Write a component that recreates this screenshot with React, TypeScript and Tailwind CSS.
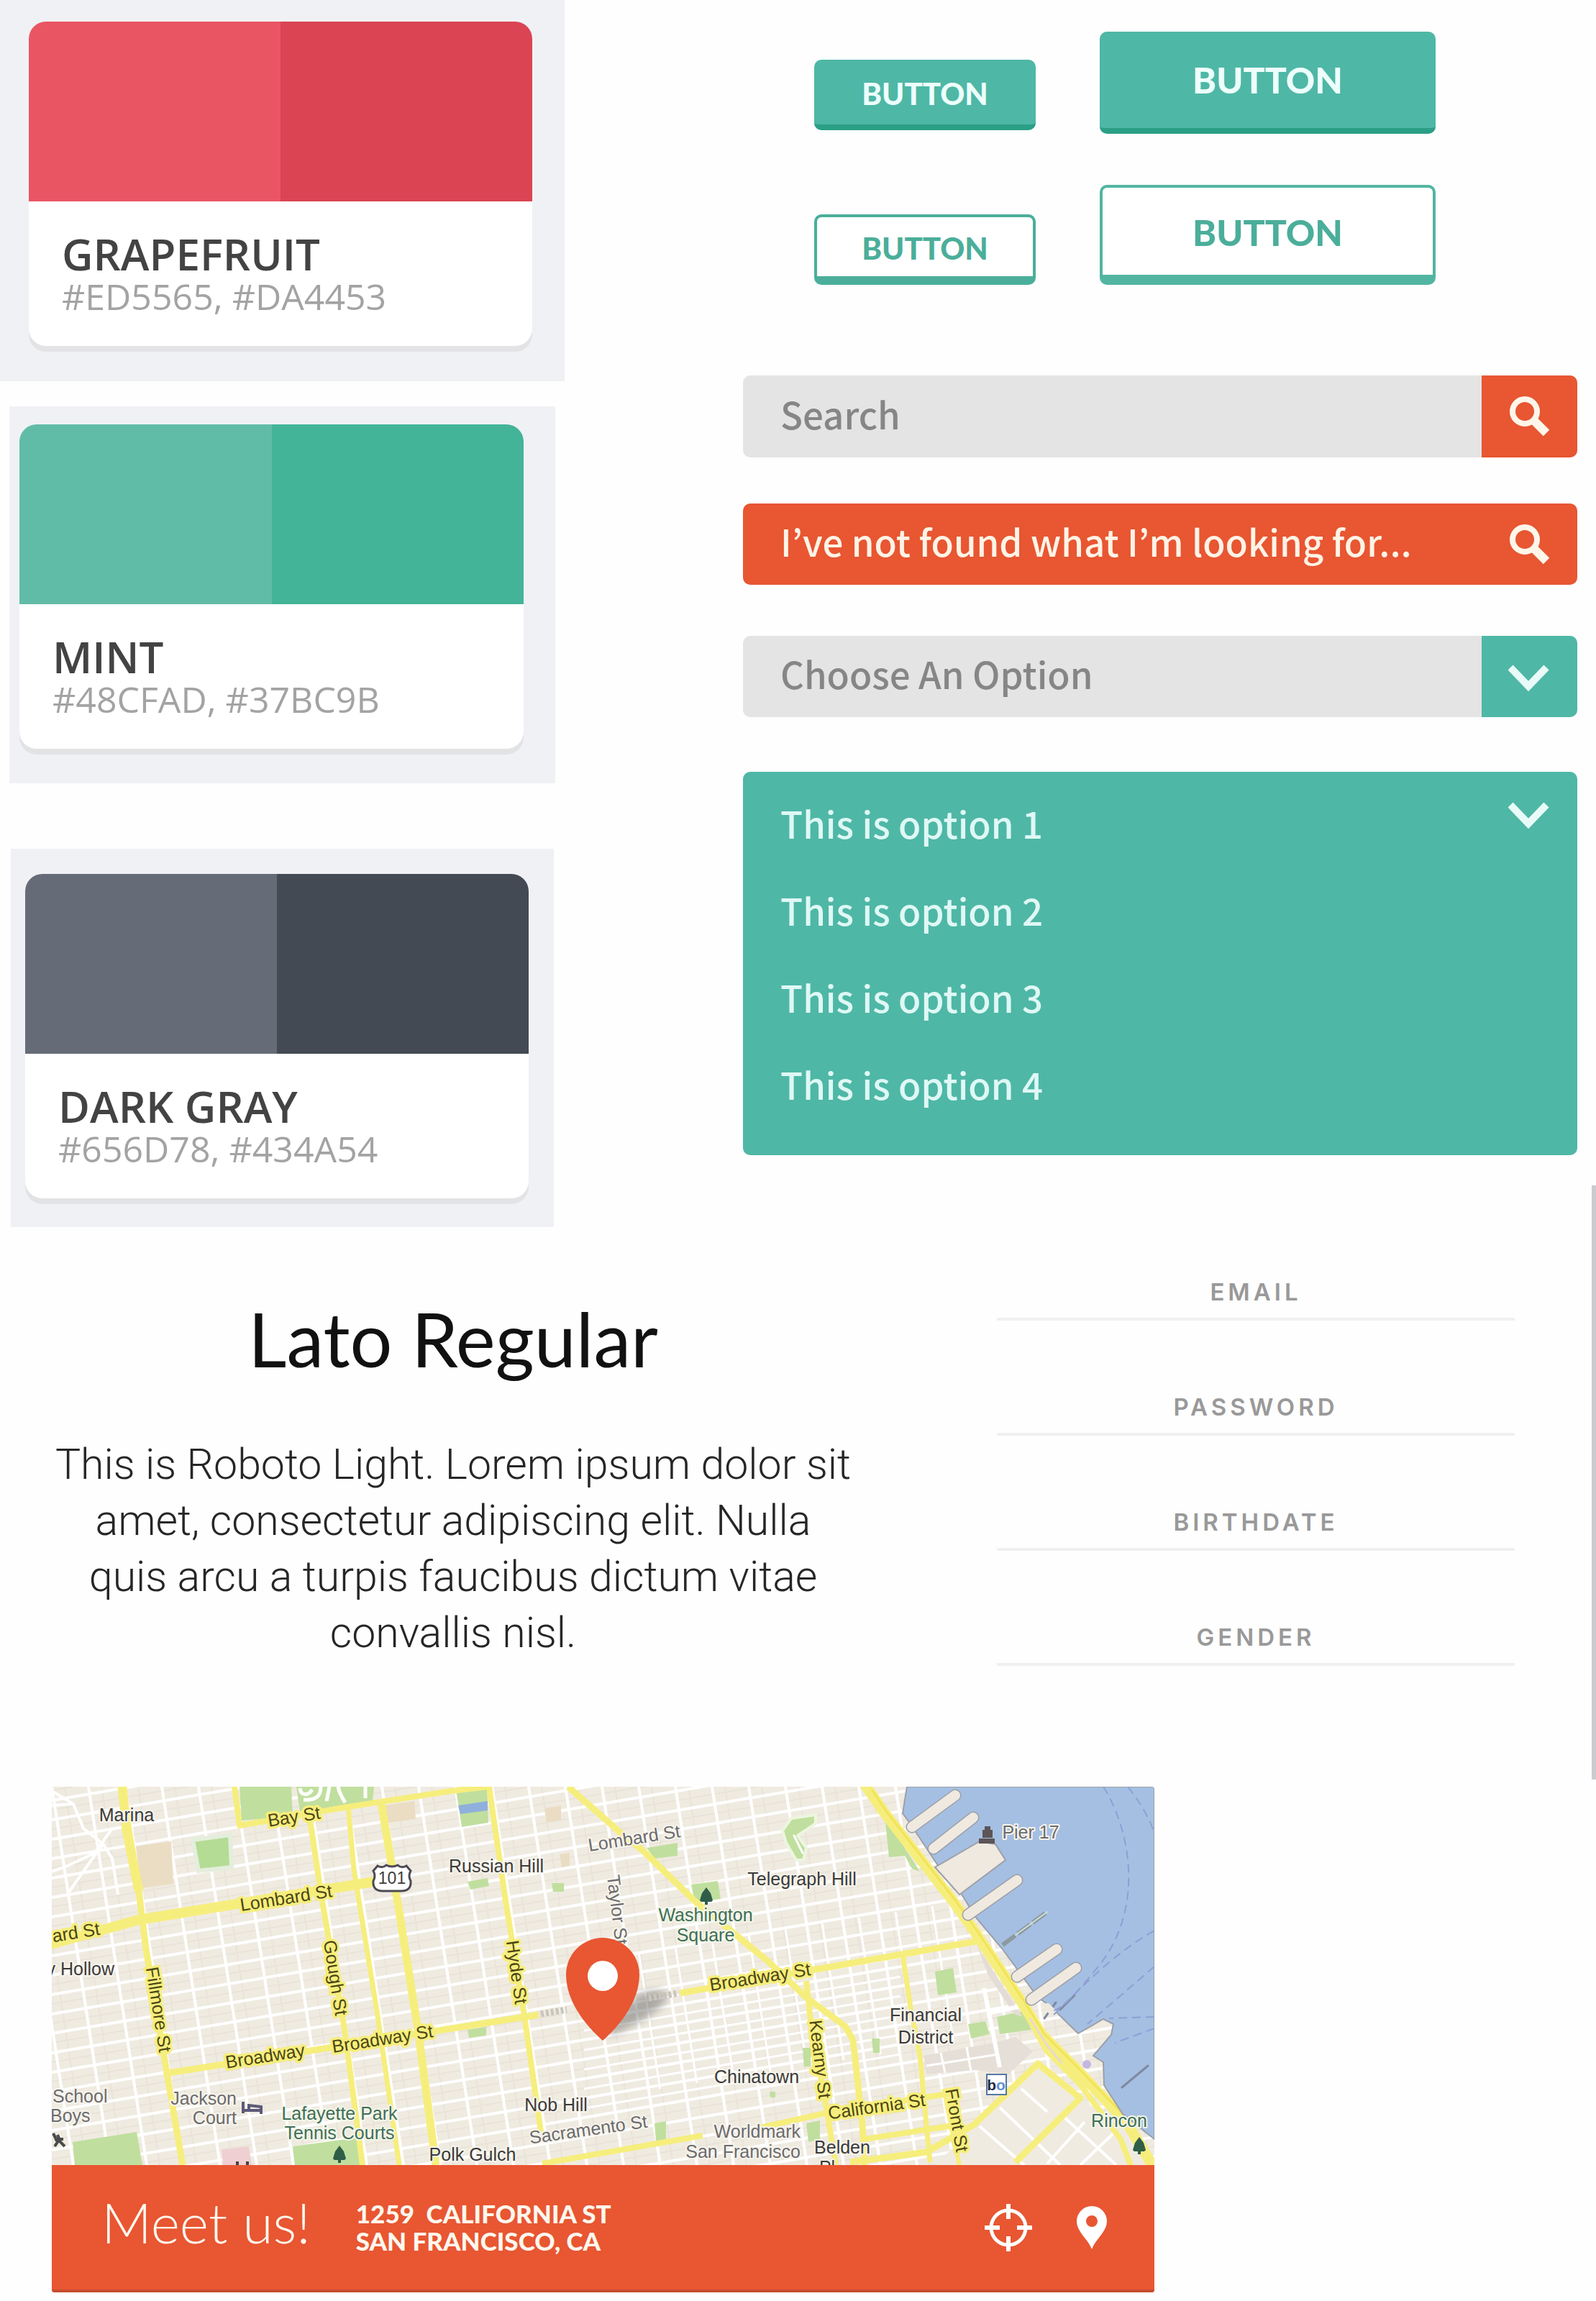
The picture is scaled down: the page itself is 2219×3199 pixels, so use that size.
import type { ReactNode } from "react";

type Swatch = {
  name: string;
  codes: string;
  frame: string;
  light: string;
  dark: string;
};

const swatches: Swatch[] = [
  {
    name: "GRAPEFRUIT",
    codes: "#ED5565, #DA4453",
    frame: "pt-[30px] pr-[45px] pb-[49px] pl-10",
    light: "bg-[#ea5564]",
    dark: "bg-[#da4453]",
  },
  {
    name: "MINT",
    codes: "#48CFAD, #37BC9B",
    frame: "mt-[35px] mx-[13px] pt-[25px] pr-[44px] pb-[48px] pl-[14px]",
    light: "bg-[#61bca7]",
    dark: "bg-[#43b498]",
  },
  {
    name: "DARK GRAY",
    codes: "#656D78, #434A54",
    frame: "mt-[91px] mx-[15px] pt-[35px] pr-[35px] pb-10 pl-5",
    light: "bg-[#666c77]",
    dark: "bg-[#444a53]",
  },
];

function SwatchCard({ swatch }: { swatch: Swatch }) {
  return (
    <div className={`bg-[#f0f1f5] ${swatch.frame}`}>
      <article className="overflow-hidden rounded-[24px] bg-white shadow-[0_8px_0_#e3e3e6]">
        <div className="flex h-[250px]">
          <div className={`flex-1 ${swatch.light}`} />
          <div className={`flex-1 ${swatch.dark}`} />
        </div>
        <div className="px-[46px] pt-[43px] pb-10 font-['Open_Sans',sans-serif]">
          <h3 className="text-[60px] leading-[60px] font-semibold text-[#434343]">{swatch.name}</h3>
          <p className="text-[50px] leading-[58px] text-[#a3a3a3]">{swatch.codes}</p>
        </div>
      </article>
    </div>
  );
}

function SearchIcon() {
  return (
    <svg viewBox="0 0 60 60" className="size-[60px]" fill="none" stroke="#fff6ea" aria-hidden="true">
      <circle cx="23" cy="23" r="17" strokeWidth="8" />
      <path d="M36 36 53 53" strokeWidth="12" />
    </svg>
  );
}

function ChevronIcon() {
  return (
    <svg viewBox="0 0 60 40" className="h-10 w-[60px]" fill="none" stroke="#e9fbf8" aria-hidden="true">
      <path d="M3 7 28 33 53 7" strokeWidth="10" />
    </svg>
  );
}

const options = ["This is option 1", "This is option 2", "This is option 3", "This is option 4"];

function Controls() {
  return (
    <div className="flex flex-1 flex-col pt-11 pr-[26px] pl-[248px] font-['Noto_Sans_CJK_KR','Noto_Sans',sans-serif] text-[51px] font-medium">
      <div className="flex flex-col gap-[71px] pl-[99px] font-['Lato',sans-serif] font-black">
        <div className="flex items-end gap-[89px]">
          <button className="mb-[5px] h-[98px] w-[308px] rounded-[10px] border-b-8 border-[#2b9f86] bg-[#4fb7a6] pt-1 text-[42px] text-[#edfffb]">
            BUTTON
          </button>
          <button className="h-[142px] w-[467px] rounded-[10px] border-b-8 border-[#2b9f86] bg-[#4fb7a6] text-[50px] text-[#edfffb]">
            BUTTON
          </button>
        </div>
        <div className="flex items-end gap-[89px]">
          <button className="h-[98px] w-[308px] rounded-[10px] border-4 border-b-12 border-[#4bae9a] bg-white pt-1 text-[42px] text-[#4bae9a]">
            BUTTON
          </button>
          <button className="h-[139px] w-[467px] rounded-[10px] border-4 border-b-14 border-[#52b5a1] bg-white pt-1 text-[50px] text-[#4bae9a]">
            BUTTON
          </button>
        </div>
      </div>

      <form className="mt-[126px] flex h-[114px] overflow-hidden rounded-[10px] bg-[#e4e4e4]">
        <input
          type="text"
          aria-label="Search"
          placeholder="Search"
          className="min-w-0 flex-1 bg-transparent pb-2 pl-[52px] text-[#868686] outline-none placeholder:text-[#868686]"
        />
        <button type="button" aria-label="Search" className="flex w-[133px] items-center justify-center bg-[#e85632]">
          <SearchIcon />
        </button>
      </form>

      <form className="mt-16 flex h-[113px] overflow-hidden rounded-[10px] bg-[#e85632]">
        <input
          type="text"
          aria-label="Search again"
          defaultValue="I’ve not found what I’m looking for..."
          className="min-w-0 flex-1 bg-transparent pb-2 pl-[52px] text-[#fff3e6] outline-none"
        />
        <button type="button" aria-label="Search again" className="flex w-[133px] items-center justify-center">
          <SearchIcon />
        </button>
      </form>

      <div className="relative mt-[71px] h-[113px]">
        <select
          aria-label="Choose An Option"
          className="h-full w-full appearance-none rounded-[10px] bg-[#e4e4e4] pb-2 pl-[52px] text-[#868686] outline-none"
        >
          <option>Choose An Option</option>
        </select>
        <span className="pointer-events-none absolute inset-y-0 right-0 flex w-[133px] items-center justify-center rounded-r-[10px] bg-[#4fb7a6]">
          <ChevronIcon />
        </span>
      </div>

      <div className="mt-[76px] flex items-start justify-between rounded-[10px] bg-[#4fb7a6] pt-[11px] pr-[36px] pb-[38px] pl-[52px] text-[#dff8f5]">
        <ul className="flex-1">
          {options.map((option) => (
            <li key={option}>
              <button className="block w-full text-left leading-[121px]">{option}</button>
            </li>
          ))}
        </ul>
        <button aria-label="Close options" className="mt-7">
          <ChevronIcon />
        </button>
      </div>
    </div>
  );
}

const fields = [
  { label: "EMAIL", type: "email" },
  { label: "PASSWORD", type: "password" },
  { label: "BIRTHDATE", type: "text" },
  { label: "GENDER", type: "text" },
];

function range(count: number) {
  return Array.from({ length: count }, (_, index) => index);
}

function Streets() {
  return (
    <g fill="none">
      <g stroke="#e9e3d8" strokeWidth="2">
        {range(34).map((i) => (
          <path key={i} d={`M${-84 + i * 51} 0l81 526`} />
        ))}
        {range(34).map((i) => (
          <path key={i} d={`M0 ${5 + i * 27}l1533 -261`} />
        ))}
      </g>
      <g stroke="#ffffff" strokeWidth="4">
        {range(33).map((i) => (
          <path key={i} d={`M${-102 + i * 51} 0l81 526`} />
        ))}
        {range(30).map((i) => (
          <path key={i} d={`M0 ${19 + i * 27}l1533 -261`} />
        ))}
        <path d="M0 6 30 24 44 58 72 80 84 100 92 150M84 58 60 92 22 110 0 118M72 80 62 92 24 146M0 26 30 24" />
      </g>
      <g stroke="#ffffff" strokeWidth="3">
        {range(9).map((i) => (
          <path key={i} d={`M${816 + i * 51} ${230 - i * 8}l30 190`} />
        ))}
        {range(6).map((i) => (
          <path key={i} d={`M740 ${312 + i * 27}l440 -75`} />
        ))}
      </g>
    </g>
  );
}

function Parks() {
  return (
    <g>
      <g fill="#c0df9e">
        <path d="M261 0H333L335 41 264 47Z" />
        <path d="M340 0H448L446 20 398 28 345 34Z" />
        <path d="M578 132 606 127 608 138 582 143Z" />
        <path d="M695 134H712V146H697Z" />
        <path d="M578 338 604 334V346L580 349Z" />
        <path d="M29 494 118 480 126 526H32Z" />
        <path d="M335 500 424 488 432 526H338Z" />
        <path d="M827 85 870 78V96L838 100Z" />
        <path d="M889 136 926 131 930 156 894 161Z" />
        <path d="M1158 40 1189 90 1207 118 1196 114 1186 96 1164 98Z" />
        <path d="M1228 257 1253 252 1258 286 1232 290Z" />
        <path d="M1274 330 1298 326 1304 344 1278 350Z" />
        <path d="M1314 320 1350 312 1362 338 1318 344Z" />
        <path d="M1044 363H1055V389H1046Z" />
        <path d="M838 468 854 465V490L840 493Z" />
        <path d="M1049 468 1068 464V490L1052 494Z" />
        <path d="M1140 350H1151V370H1142Z" />
        <path d="M1298 498 1308 492 1316 504 1304 510Z" />
        <path d="M1430 480 1440 474 1446 484 1436 490Z" />
        <path d="M1408 502 1416 496 1422 504 1412 510Z" />
        <path d="M1484 506 1492 500 1500 512 1488 516Z" />
        <path d="M998 424H1006V432H999Z" />
      </g>
      <path d="M196 74 248 67 250 112 204 117Z" fill="#b4dc94" stroke="#e4eedc" strokeWidth="6" />
      <g fill="#eaddc3">
        <path d="M117 83 166 76 169 135 124 141Z" />
        <path d="M463 26 504 20 506 45 468 50Z" />
        <path d="M685 30 708 26V46L688 50Z" />
        <path d="M706 94 720 92V110L709 112Z" />
      </g>
      <path d="M562 4 605 0 607 50 570 56Z" fill="#c0df9e" />
      <path d="M565 26 606 20V33L568 38Z" fill="#8fb0dc" />
      <path d="M236 505 274 500 278 526H238Z" fill="#efcfd2" />
      <path d="M1212 374 1310 356 1340 348 1364 368 1330 400 1284 394 1216 400Z" fill="#e6dfd8" />
      <path d="M1286 220 1350 320 1338 316 1302 262Z" fill="#e4ddd6" />
      <g fill="none" stroke="#ffffff">
        <path
          d="M345 2C346 12 356 14 362 4M350 18C372 20 374 8 374 0M386 0 382 20M398 0C400 10 404 16 408 22M436 0V16"
          strokeWidth="5"
        />
        <path d="M1296 280 1318 390M1306 314 1344 306" strokeWidth="6" />
        <path d="M1236 370 1242 398M1272 362 1278 396M1216 388 1316 372" strokeWidth="3" />
      </g>
      <path
        d="M1062 39 1028 44 1016 61 1021 78 1035 102 1045 102 1049 85 1037 68 1052 58 1062 51Z"
        fill="#c0df9e"
        stroke="#edf6e0"
        strokeWidth="4"
        strokeLinejoin="round"
      />
      <path d="M1032 68 1044 92" stroke="#ffffff" strokeWidth="3" strokeLinecap="round" />
    </g>
  );
}

function Bay() {
  const piers = [
    "M1196 56 1256 12",
    "M1226 86 1281 43",
    "M1274 178 1342 130",
    "M1342 264 1397 226",
    "M1362 296 1424 252",
  ];
  return (
    <g>
      <path
        d="M1189 0 1183 37 1194 52 1231 108 1264 148 1285 182 1322 226 1349 263 1371 293 1387 304 1427 343 1462 323 1476 330 1473 345 1448 374 1462 383 1463 415 1489 455 1533 490V0Z"
        fill="#a5bfe2"
        stroke="#9c9fa8"
        strokeWidth="2"
      />
      <g fill="none" strokeLinecap="round">
        {piers.map((d) => (
          <path key={d} d={d} stroke="#9c9fa8" strokeWidth="17" />
        ))}
        <path
          d="M1228 112 1290 76 1312 80 1326 102 1262 150Z"
          fill="#efe9df"
          stroke="#9c9fa8"
          strokeWidth="2"
        />
        {piers.map((d) => (
          <path key={d} d={d} stroke="#efe9df" strokeWidth="14" />
        ))}
        <path d="M1322 220 1384 174" stroke="#8d9aa0" strokeWidth="6" strokeLinecap="butt" strokeDasharray="22 4" />
        <path d="M1340 206 1384 174" stroke="#cfe0d4" strokeWidth="2" />
        <path d="M1488 418 1524 388M1402 310 1422 290M1380 322 1396 300" stroke="#7f8aa0" strokeWidth="3" />
        <path d="M1384 306 1392 314" stroke="#efe9df" strokeWidth="10" />
        <circle cx="1439" cy="386" r="6" fill="#c3b8e0" />
      </g>
      <g fill="none" stroke="#8d9fd4" strokeWidth="2" strokeDasharray="12 7">
        <path d="M1462 0C1500 60 1520 170 1455 250S1400 300 1390 316" />
        <path d="M1496 0C1512 20 1524 40 1533 64" />
        <path d="M1533 200C1480 230 1440 270 1392 318" />
        <path d="M1533 250 1440 330M1533 320 1470 322M1533 336 1478 356" />
      </g>
    </g>
  );
}

function MainRoads() {
  const roads: { d: string; width: number }[] = [
    { d: "M98 0 102 30 121 145 131 226 159 392 182 526", width: 9 },
    { d: "M98 0 104 60 121 145", width: 13 },
    { d: "M-2 219 121 185 448 132", width: 14 },
    { d: "M254 0 261 54 412 28 555 6 606 0", width: 8 },
    { d: "M358 40 376 159 407 337 432 526", width: 8 },
    { d: "M412 26 420 115 453 318 483 526", width: 7 },
    { d: "M458 22 471 100 483 174 509 337 534 526", width: 11 },
    { d: "M608 0 631 159 657 318 680 480", width: 8 },
    { d: "M162 398 677 317", width: 9 },
    { d: "M718 0 792 65 822 89 894 159 996 243 1049 293 1103 333 1114 352 1127 470 1130 526", width: 9 },
    { d: "M1049 270 1055 326 1076 441 1090 526", width: 8 },
    { d: "M873 287 1285 215", width: 9 },
    { d: "M1183 233 1194 307 1207 374 1221 522", width: 7 },
    { d: "M985 474 1071 455 1264 424", width: 8 },
    { d: "M682 524 905 485M1130 490 1260 470", width: 8 },
    { d: "M1110 522 1216 508 1282 470 1371 385 1430 433 1340 522", width: 9 },
    { d: "M1240 420 1262 526", width: 6 },
    { d: "M1352 306 1368 340 1384 368 1430 414 1486 490 1500 526", width: 8 },
    { d: "M1130 -4 1156 34 1253 159 1285 204 1349 300 1376 344 1424 392 1494 466 1530 526", width: 15 },
  ];
  return (
    <g fill="none" strokeLinejoin="round">
      <path d="M1282 474 1371 389 1430 433 1494 476 1526 526H1228Z" fill="#f0ebe1" />
      <g stroke="#ffffff" strokeWidth="4">
        <path d="M1290 472 1352 526M1318 446 1402 526M1348 420 1384 452M1404 456 1480 526M1384 524 1436 466M1430 526 1478 480" />
      </g>
      {roads.map((road) => (
        <path key={road.d} d={road.d} stroke="#f6ee7c" strokeWidth={road.width} />
      ))}
      <path d="M1140 4 1160 34 1257 159 1289 204 1353 300 1380 344 1428 392 1494 460" stroke="#f2e25a" strokeWidth="3" />
      <path d="M1360 322 1384 360 1404 384" stroke="#e9d9d2" strokeWidth="3" />
    </g>
  );
}

type MapLabel = {
  text: string;
  x: number;
  y: number;
  turn?: number;
  tone?: "place" | "road" | "minor" | "park";
  anchor?: "start" | "middle" | "end";
};

const mapLabels: MapLabel[] = [
  { text: "Marina", x: 104, y: 48 },
  { text: "Russian Hill", x: 618, y: 119 },
  { text: "v Hollow", x: 87, y: 262, anchor: "end" },
  { text: "Telegraph Hill", x: 1043, y: 137 },
  { text: "Nob Hill", x: 701, y: 451 },
  { text: "Polk Gulch", x: 585, y: 520 },
  { text: "Chinatown", x: 980, y: 412 },
  { text: "Financial", x: 1215, y: 326 },
  { text: "District", x: 1215, y: 357 },
  { text: "Belden", x: 1099, y: 510 },
  { text: "Pl", x: 1078, y: 538 },
  { text: "School", x: 1, y: 439, tone: "minor", anchor: "start" },
  { text: "Boys", x: -2, y: 466, tone: "minor", anchor: "start" },
  { text: "Jackson", x: 257, y: 442, tone: "minor", anchor: "end" },
  { text: "Court", x: 257, y: 469, tone: "minor", anchor: "end" },
  { text: "Worldmark", x: 1041, y: 488, tone: "minor", anchor: "end" },
  { text: "San Francisco", x: 1041, y: 516, tone: "minor", anchor: "end" },
  { text: "Pier 17", x: 1361, y: 72, tone: "minor" },
  { text: "Sacramento St", x: 747, y: 485, turn: -8, tone: "minor" },
  { text: "Lombard St", x: 811, y: 80, turn: -9, tone: "minor" },
  { text: "Taylor St", x: 778, y: 172, turn: 83, tone: "minor" },
  { text: "Lafayette Park", x: 400, y: 463, tone: "park" },
  { text: "Tennis Courts", x: 400, y: 490, tone: "park" },
  { text: "Washington", x: 909, y: 187, tone: "park" },
  { text: "Square", x: 909, y: 215, tone: "park" },
  { text: "Rincon", x: 1484, y: 473, tone: "park" },
  { text: "Bay St", x: 338, y: 50, turn: -9, tone: "road" },
  { text: "Lombard St", x: 327, y: 163, turn: -9, tone: "road" },
  { text: "ard St", x: 35, y: 211, turn: -9, tone: "road" },
  { text: "Broadway", x: 298, y: 383, turn: -9, tone: "road" },
  { text: "Broadway St", x: 461, y: 359, turn: -9, tone: "road" },
  { text: "Broadway St", x: 986, y: 273, turn: -9, tone: "road" },
  { text: "California St", x: 1148, y: 453, turn: -8, tone: "road" },
  { text: "Fillmore St", x: 140, y: 311, turn: 81, tone: "road" },
  { text: "Gough St", x: 386, y: 267, turn: 81, tone: "road" },
  { text: "Hyde St", x: 638, y: 259, turn: 82, tone: "road" },
  { text: "Kearny St", x: 1060, y: 380, turn: 83, tone: "road" },
  { text: "Front St", x: 1250, y: 465, turn: 80, tone: "road" },
];

const tones = {
  place: { fill: "#3a3a3a", halo: "#f7f4ec" },
  minor: { fill: "#6b6b6e", halo: "#f7f4ec" },
  park: { fill: "#3f6e58", halo: "#f3f6e8" },
  road: { fill: "#4b4614", halo: "#f6ee7c" },
};

function Tree({ x, y }: { x: number; y: number }) {
  return (
    <path
      transform={`translate(${x} ${y})`}
      d="M0 -12 6 -4 9 6 7 8H2V12H-2V8H-7L-9 6-6 -4Z"
      fill="#2f5d48"
    />
  );
}

function MapView() {
  return (
    <svg
      viewBox="0 0 1533 526"
      className="block w-full font-['Liberation_Sans',Arial,sans-serif]"
      role="img"
      aria-label="Map of San Francisco"
    >
      <rect width="1533" height="526" fill="#f0ebe1" />
      <Streets />
      <Parks />
      <MainRoads />
      <Bay />
      <g fontSize="25" strokeLinejoin="round" paintOrder="stroke">
        {mapLabels.map((label) => {
          const tone = tones[label.tone ?? "place"];
          return (
            <text
              key={`${label.text}-${label.x}`}
              transform={`translate(${label.x} ${label.y}) rotate(${label.turn ?? 0})`}
              textAnchor={label.anchor ?? "middle"}
              fill={tone.fill}
              stroke={tone.halo}
              strokeWidth={label.tone === "road" ? 7 : 4}
            >
              {label.text}
            </text>
          );
        })}
      </g>

      {/* Route shield */}
      <path
        d="M453 110Q460 114 465 109 473 113 481 109 486 114 493 110L499 117Q495 124 499 131 500 145 486 145H460Q446 145 447 131 451 124 447 117Z"
        fill="#ffffff"
        stroke="#4c4a55"
        strokeWidth="3"
      />
      <text x="473" y="135" textAnchor="middle" fontSize="23" fill="#3c3c3c">
        101
      </text>

      {/* Points of interest */}
      <Tree x={400} y={511} />
      <Tree x={910} y={152} />
      <Tree x={1512} y={499} />
      <path d="M266 438V454M266 450H291V455M291 450V445L274 443V450" fill="none" stroke="#5b5a78" strokeWidth="4" />
      <path d="M2 482 8 494 4 500M8 484 12 494 18 500M4 490H16" fill="none" stroke="#4b4b4b" strokeWidth="4" />
      <path d="M258 521V526M272 521V526" stroke="#444444" strokeWidth="4" />
      <path d="M1289 72H1311V79H1289ZM1294 60H1308V71H1294ZM1297 55H1305V60H1297Z" fill="#5d5457" />
      <rect x="1300" y="400" width="27" height="28" fill="#ffffff" stroke="#5577a8" strokeWidth="2" />
      <text x="1313" y="422" textAnchor="middle" fontSize="21" fontWeight="700" fill="#1f2a44">
        b<tspan fill="#5f8fd0">o</tspan>
      </text>

      {/* Location pin */}
      <defs>
        <filter id="pin-shadow" x="-30%" y="-30%" width="160%" height="160%">
          <feGaussianBlur stdDeviation="6" />
        </filter>
      </defs>
      <path
        d="M772 348C792 304 815 280 845 284 872 288 846 318 772 348Z"
        fill="#5b5b5b"
        opacity="0.45"
        filter="url(#pin-shadow)"
      />
      <path d="M680 316 716 310M830 294 872 287" stroke="#c9c5bb" strokeWidth="9" strokeDasharray="4 3" />
      <path
        d="M766 353C749 338 715 303 715 261A51 51 0 0 1 817 261C817 303 783 338 766 353Z"
        fill="#e85632"
      />
      <circle cx="766" cy="263" r="21" fill="#ffffff" />
    </svg>
  );
}

function IconButton({ label, children }: { label: string; children: ReactNode }) {
  return (
    <button aria-label={label} className="block">
      {children}
    </button>
  );
}

function MeetUs() {
  return (
    <section className="mt-[10px] mr-[614px] ml-[72px] overflow-hidden rounded-[4px]">
      <MapView />
      <footer className="flex h-[177px] items-center border-b-4 border-[#c64e2e] bg-[#e85632] pr-[66px] pl-[69px] font-['Lato',sans-serif] text-[#fff8ee]">
        <h2 className="pb-4 text-[77px] leading-[90px] font-light">Meet us!</h2>
        <address className="ml-[63px] flex-1 pb-0.5 text-[35px] leading-[38px] font-black not-italic">
          1259&nbsp; CALIFORNIA ST
          <br />
          SAN FRANCISCO, CA
        </address>
        <div className="flex items-center gap-[61px]">
          <IconButton label="Locate me">
            <svg viewBox="0 0 68 68" className="size-[68px]" fill="none" stroke="#ffffff" aria-hidden="true">
              <circle cx="34" cy="34" r="24" strokeWidth="5" />
              <path d="M34 1V22M34 46V67M1 34H22M46 34H67" strokeWidth="6" />
            </svg>
          </IconButton>
          <IconButton label="Show on map">
            <svg viewBox="0 0 42 60" className="h-[60px] w-[42px]" fill="#ffffff" aria-hidden="true">
              <path
                fillRule="evenodd"
                d="M21 0A21 21 0 0 0 0 21C0 36 16 46 21 60 26 46 42 36 42 21A21 21 0 0 0 21 0ZM21 13A8 8 0 1 1 21 29 8 8 0 0 1 21 13Z"
              />
            </svg>
          </IconButton>
        </div>
      </footer>
    </section>
  );
}

export default function App() {
  return (
    <main className="min-h-screen bg-[#fefefe] pb-3">
      <section className="flex items-start">
        <div className="w-[785px] shrink-0">
          {swatches.map((swatch) => (
            <SwatchCard key={swatch.name} swatch={swatch} />
          ))}
        </div>
        <Controls />
      </section>

      <section className="-mt-[58px] flex h-[826px] items-start border-r-6 border-[#cbcbcf]">
        <div className="flex-1 pt-[153px] pl-1 text-center">
          <h1 className="font-['Lato',sans-serif] text-[104px] leading-[120px] text-[#111111]">Lato Regular</h1>
          <p className="mt-[76px] font-['Roboto',sans-serif] text-[59px] leading-[78px] font-light text-[#262626]">
            This is Roboto Light. Lorem ipsum dolor sit
            <br />
            amet, consectetur adipiscing elit. Nulla
            <br />
            quis arcu a turpis faucibus dictum vitae
            <br />
            convallis nisl.
          </p>
        </div>
        <form className="mr-[107px] ml-[130px] flex w-[720px] flex-col gap-[84px] pt-28">
          {fields.map((field) => (
            <input
              key={field.label}
              type={field.type}
              aria-label={field.label}
              placeholder={field.label}
              className="h-[76px] w-full border-b-4 border-[#f0f0f0] bg-transparent text-center font-['Inter',sans-serif] text-[33px] font-semibold tracking-[5px] outline-none placeholder:text-[#999999]"
            />
          ))}
        </form>
      </section>

      <MeetUs />
    </main>
  );
}
